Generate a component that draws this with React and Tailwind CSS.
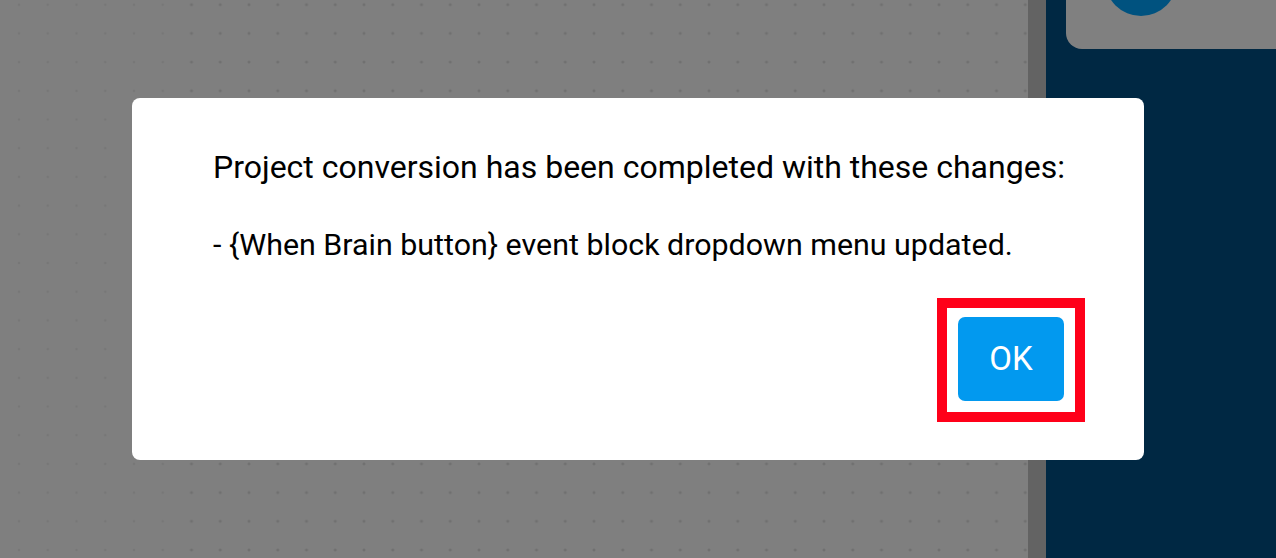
import { useId } from 'react';

function DotGrid({ faintUntil = 177 }) {
    const id = useId().replace(/:/g, '');
    return (
        <svg className="absolute inset-0 w-full h-full" aria-hidden="true">
            <defs>
                <pattern id={`dots-${id}`} x="19" y="4.7" width="28.75" height="28.7" patternUnits="userSpaceOnUse">
                    <rect x="-1.5" y="-0.5" width="3" height="1" fill="#6a6a6a" />
                    <rect x="-0.5" y="-1.5" width="1" height="3" fill="#6a6a6a" />
                    <rect x="27.25" y="-0.5" width="3" height="1" fill="#6a6a6a" />
                    <rect x="28.25" y="-1.5" width="1" height="3" fill="#6a6a6a" />
                    <rect x="-1.5" y="28.2" width="3" height="1" fill="#6a6a6a" />
                    <rect x="-0.5" y="27.2" width="1" height="3" fill="#6a6a6a" />
                    <rect x="27.25" y="28.2" width="3" height="1" fill="#6a6a6a" />
                    <rect x="28.25" y="27.2" width="1" height="3" fill="#6a6a6a" />
                </pattern>
                <pattern id={`faint-${id}`} x="19" y="4.7" width="28.75" height="28.7" patternUnits="userSpaceOnUse">
                    <circle cx="0" cy="0" r="1.3" fill="#777777" />
                    <circle cx="28.75" cy="0" r="1.3" fill="#777777" />
                    <circle cx="0" cy="28.7" r="1.3" fill="#777777" />
                    <circle cx="28.75" cy="28.7" r="1.3" fill="#777777" />
                </pattern>
            </defs>
            <rect x="0" y="0" width={faintUntil} height="100%" fill={`url(#faint-${id})`} />
            <rect x={faintUntil} y="0" width="100%" height="100%" fill={`url(#dots-${id})`} />
        </svg>
    );
}

export default function App() {
    return (
        <div className="relative w-[1276px] h-[558px] overflow-hidden flex bg-[#7f7f7f] font-['Roboto','Liberation_Sans',sans-serif]">
            {/* workspace canvas */}
            <div className="relative w-[1028px] h-full">
                <DotGrid />
            </div>
            <div className="w-[18px] h-full bg-[#636363]" />

            {/* side panel */}
            <div className="flex-1 h-full bg-[#002843] pl-[20px]">
                <div className="relative h-[49px] bg-[#808080] rounded-bl-[16px] overflow-hidden">
                    <div className="absolute left-[39px] top-[-56px] w-[72px] h-[72px] rounded-full bg-[#00527f]" />
                </div>
            </div>

            {/* conversion dialog */}
            <div className="absolute inset-0 pl-[132px] pt-[98px]">
                <div className="w-[1012px] h-[362px] bg-white rounded-[8px] pl-[81px] pr-[59px] pt-[50px] flex flex-col text-black">
                    <p className="text-[32px] leading-[38px] whitespace-nowrap">
                        Project conversion has been completed with these changes:
                    </p>
                    <p className="mt-[40px] text-[30.4px] leading-[38px] whitespace-nowrap">
                        - {'{'}When Brain button{'}'} event block dropdown menu updated.
                    </p>
                    <div className="flex justify-end mt-[34px]">
                        <div className="border-[10px] border-[#ff0019] pt-[9px] pb-[11px] px-[11px]">
                            <button className="w-[106px] h-[84px] rounded-[7px] bg-[#0299ef] text-white text-[33px]">
                                OK
                            </button>
                        </div>
                    </div>
                </div>
            </div>
        </div>
    );
}
